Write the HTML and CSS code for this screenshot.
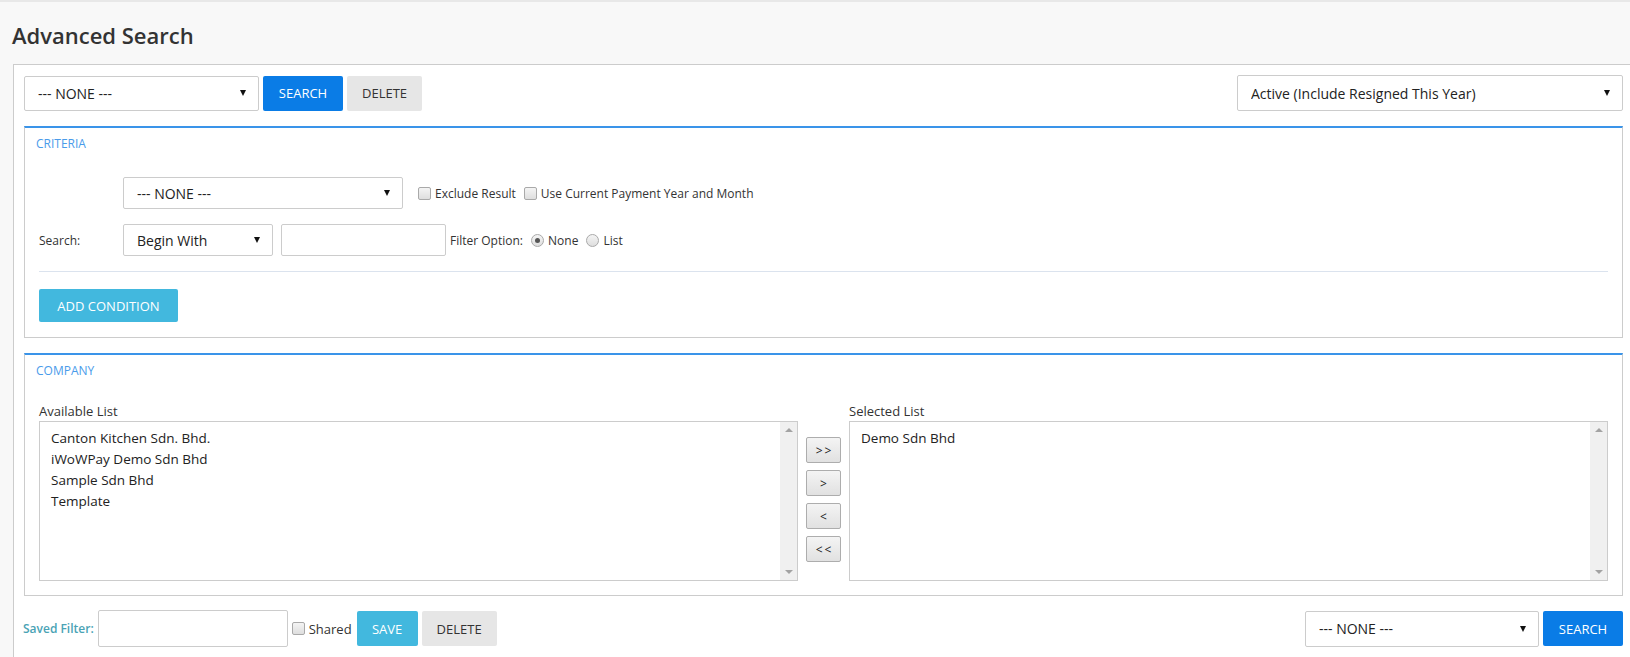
FILE: index.html
```html
<!DOCTYPE html>
<html lang="en">
  <head>
    <meta charset="UTF-8" />
    <title>Advanced Search</title>
    <link rel="stylesheet" href="styles.css">
  </head>
  <body>
    <h1 class="page-title">Advanced Search</h1>

    <div class="panel">
      <div class="toolbar">
        <div class="group">
          <span class="select-wrap w-saved">
            <select><option>--- NONE ---</option></select>
          </span>
          <button class="btn btn-primary w-search">SEARCH</button>
          <button class="btn btn-default w-delete">DELETE</button>
        </div>
        <span class="select-wrap w-status">
          <select><option>Active (Include Resigned This Year)</option></select>
        </span>
      </div>

      <div class="box">
        <div class="box-title">CRITERIA</div>
        <div class="box-body">
          <div class="form-row">
            <span class="row-label"></span>
            <span class="select-wrap w-field">
              <select><option>--- NONE ---</option></select>
            </span>
            <label class="check first"><input type="checkbox" /> Exclude Result</label>
            <label class="check"><input type="checkbox" /> Use Current Payment Year and Month</label>
          </div>
          <div class="form-row">
            <span class="row-label">Search:</span>
            <span class="select-wrap w-mode">
              <select><option>Begin With</option></select>
            </span>
            <input type="text" class="text-input w-value" />
            <span class="filter-label">Filter Option:</span>
            <label class="check"><input type="radio" name="opt" checked /> None</label>
            <label class="check"><input type="radio" name="opt" /> List</label>
          </div>
          <hr class="divider" />
          <button class="btn btn-info w-add">ADD CONDITION</button>
        </div>
      </div>

      <div class="box">
        <div class="box-title">COMPANY</div>
        <div class="box-body company">
          <div class="list-col">
            <div class="list-label">Available List</div>
            <div class="listbox">
              <ul class="items">
                <li>Canton Kitchen Sdn. Bhd.</li>
                <li>iWoWPay Demo Sdn Bhd</li>
                <li>Sample Sdn Bhd</li>
                <li>Template</li>
              </ul>
              <div class="scrollbar"><span class="up"></span><span class="down"></span></div>
            </div>
          </div>
          <div class="move-col">
            <button class="move-btn">&gt;&gt;</button>
            <button class="move-btn">&gt;</button>
            <button class="move-btn">&lt;</button>
            <button class="move-btn">&lt;&lt;</button>
          </div>
          <div class="list-col">
            <div class="list-label">Selected List</div>
            <div class="listbox">
              <ul class="items">
                <li>Demo Sdn Bhd</li>
              </ul>
              <div class="scrollbar"><span class="up"></span><span class="down"></span></div>
            </div>
          </div>
        </div>
      </div>

      <div class="footer-row">
        <div class="group">
          <span class="saved-label">Saved Filter:</span>
          <input type="text" class="text-input w-name" />
          <label class="check shared"><input type="checkbox" /> Shared</label>
          <button class="btn btn-info w-save">SAVE</button>
          <button class="btn btn-default w-delete">DELETE</button>
        </div>
        <div class="group">
          <span class="select-wrap w-saved-bottom">
            <select><option>--- NONE ---</option></select>
          </span>
          <button class="btn btn-primary w-search">SEARCH</button>
        </div>
      </div>
    </div>
  </body>
</html>
```

FILE: styles.css
```css
* {
  margin: 0;
  padding: 0;
  box-sizing: border-box;
}

body {
  font-family: "Open Sans", "Liberation Sans", sans-serif;
  font-size: 12px;
  color: #333;
  background: #f8f8f8;
  border-top: 2px solid #e8e8e8;
  overflow: hidden;
}

.page-title {
  font-size: 22px;
  font-weight: 600;
  line-height: 30px;
  color: #333;
  padding: 18px 0 0 12px;
  margin-bottom: 14px;
}

.panel {
  width: 1621px;
  margin-left: 13px;
  background: #fff;
  border: 1px solid #ccc;
  padding: 10px 10px 20px 10px;
}

.toolbar,
.footer-row {
  display: flex;
  justify-content: space-between;
  align-items: center;
}

.group {
  display: flex;
  align-items: center;
  gap: 4px;
}

/* selects */
.select-wrap {
  position: relative;
  display: inline-block;
  height: 35px;
}

.select-wrap select {
  appearance: none;
  -webkit-appearance: none;
  width: 100%;
  height: 100%;
  border: 1px solid #ccc;
  border-radius: 2px;
  background: #fff;
  font-family: inherit;
  font-size: 14px;
  color: #222;
  padding: 0 13px;
}

.select-wrap::after {
  content: "";
  position: absolute;
  right: 13px;
  top: 50%;
  margin-top: -3px;
  border-left: 3.5px solid transparent;
  border-right: 3.5px solid transparent;
  border-top: 6px solid #111;
}

.w-saved { width: 235px; }
.w-status { width: 386px; height: 36px; }
.w-field { width: 280px; height: 32px; }
.w-mode { width: 150px; height: 32px; }
.w-saved-bottom { width: 234px; height: 36px; }

/* buttons */
.btn {
  height: 35px;
  border: none;
  border-radius: 2px;
  font-family: inherit;
  font-size: 13px;
  cursor: pointer;
}

.btn-primary {
  background: #0a7ce6;
  color: #fff;
}

.btn-default {
  background: #e6e6e6;
  color: #333;
}

.btn-info {
  background: #42b8de;
  color: #fff;
}

.w-search { width: 80px; }
.w-delete { width: 75px; }
.w-add { width: 139px; height: 33px; }
.w-save { width: 61px; }

.text-input {
  border: 1px solid #ccc;
  border-radius: 2px;
  font-family: inherit;
  font-size: 13px;
  padding: 0 8px;
}

.w-value { width: 165px; height: 32px; }
.w-name { width: 190px; height: 37px; }

/* boxes */
.box {
  border: 1px solid #ccc;
  border-top: 2px solid #3a94e9;
  margin-top: 15px;
}

.box-title {
  font-size: 12px;
  line-height: 16px;
  color: #4a9bea;
  padding: 8px 11px 0;
}

.box-body {
  padding: 25px 14px 15px;
}

.form-row {
  display: flex;
  align-items: center;
  gap: 8px;
  margin-bottom: 15px;
}

.row-label {
  width: 76px;
  font-size: 12px;
}

.check {
  display: inline-flex;
  align-items: center;
  gap: 4px;
  font-size: 12px;
  white-space: nowrap;
}

.check.first {
  margin-left: 7px;
}

.check input {
  appearance: none;
  -webkit-appearance: none;
  width: 13px;
  height: 13px;
  border: 1px solid #a9a9a9;
  border-radius: 2px;
  background: linear-gradient(#f4f4f4, #dedede);
  position: relative;
}

.check input[type="radio"] {
  border-radius: 50%;
}

.check input[type="radio"]:checked::after {
  content: "";
  position: absolute;
  left: 3px;
  top: 3px;
  width: 5px;
  height: 5px;
  border-radius: 50%;
  background: #555;
}

.filter-label {
  font-size: 12px;
  margin-left: -4px;
}

.divider {
  border: none;
  border-top: 1px solid #dbe3ee;
  margin: 0 0 17px;
}

/* company lists */
.company {
  display: grid;
  grid-template-columns: 1fr 35px 1fr;
  gap: 8px;
  padding-top: 24px;
  padding-bottom: 14px;
}

.list-label {
  font-size: 13px;
  line-height: 16px;
  margin-bottom: 2px;
}

.listbox {
  display: flex;
  height: 160px;
  border: 1px solid #ccc;
}

.items {
  flex: 1;
  list-style: none;
  padding: 6px 11px;
  font-size: 13.5px;
  line-height: 21px;
  color: #222;
}

.scrollbar {
  width: 17px;
  background: #f0f0f0;
  display: flex;
  flex-direction: column;
  justify-content: space-between;
  align-items: center;
  padding: 6px 0;
}

.scrollbar .up {
  border-left: 4px solid transparent;
  border-right: 4px solid transparent;
  border-bottom: 4px solid #a3a3a3;
}

.scrollbar .down {
  border-left: 4px solid transparent;
  border-right: 4px solid transparent;
  border-top: 4px solid #a3a3a3;
}

.move-col {
  display: flex;
  flex-direction: column;
  gap: 7px;
  padding-top: 34px;
}

.move-btn {
  width: 35px;
  height: 26px;
  border: 1px solid #adadad;
  border-radius: 2px;
  background: linear-gradient(#f4f4f4, #e1e1e1);
  font-family: inherit;
  font-size: 12px;
  letter-spacing: 2px;
  text-indent: 2px;
  color: #222;
}

/* footer */
.footer-row {
  margin-top: 14px;
}

.saved-label {
  color: #4aa3b5;
  font-weight: 600;
  font-size: 12px;
  margin-left: -1px;
}

.shared {
  margin: 0 1px 0 0;
  font-size: 13px;
}
```
